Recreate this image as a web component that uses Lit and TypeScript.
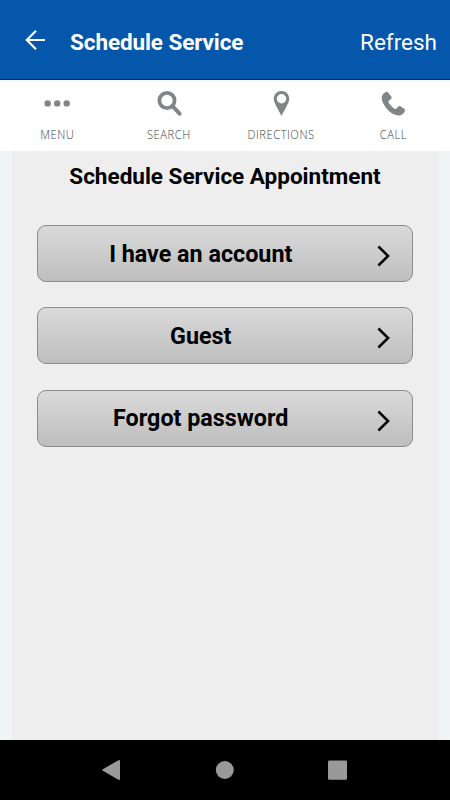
import { LitElement, html, css, svg } from "lit";
import { customElement } from "lit/decorators.js";

const tabs = [
  { id: "menu", label: "MENU", icon: svg`<circle cx="18.7" cy="14.4" r="3.2"/><circle cx="28.2" cy="14.4" r="3.2"/><circle cx="37.7" cy="14.4" r="3.2"/>` },
  { id: "search", label: "SEARCH", icon: svg`<circle cx="26" cy="11.5" r="7.6" fill="none" stroke="#808587" stroke-width="3.8"/><path d="M31.4 17L38.6 24.7" stroke="#808587" stroke-width="4" stroke-linecap="round"/>` },
  { id: "directions", label: "DIRECTIONS", icon: svg`<path fill-rule="evenodd" d="M28.5 2C24.1 2 20.8 5.3 20.8 9.7C20.8 13.5 23.5 17 28.5 27C33.5 17 36.2 13.5 36.2 9.7C36.2 5.3 32.9 2 28.5 2ZM28.5 5A4.7 4.7 0 1 1 28.5 14.4A4.7 4.7 0 1 1 28.5 5Z"/>` },
  { id: "call", label: "CALL", icon: svg`<path d="M20.5 3.2C17 5 16 8.3 17.4 12.5C20.3 19.6 26.2 25.6 33 26.4C36 26.6 38.2 25.2 39.7 22.5C40.2 21.4 40.1 20.8 39.4 20.1L35.6 17.2C34.8 16.7 34.1 16.8 33.4 17.5L31.3 19.7C30.8 20.2 30.2 20.2 29.4 19.7C27 18.1 25 16 23.6 13.6C23.2 12.8 23.3 12.3 23.9 11.8L26.1 9.8C26.8 9.1 26.9 8.5 26.4 7.7L23.3 3.7C22.5 2.7 21.6 2.6 20.5 3.2Z"/>` },
];

const choices = [
  { id: "account", label: "I have an account" },
  { id: "guest", label: "Guest" },
  { id: "forgot", label: "Forgot password" },
];

@customElement("app-root")
export class AppRoot extends LitElement {
  static styles = css`
    :host { display: flex; flex-direction: column; width: 450px; height: 800px; overflow: hidden; background: #f0f4f5; font-family: Roboto, sans-serif; }
    svg { display: block; flex: none; }
    .bar { box-sizing: border-box; height: 80px; flex: none; display: flex; align-items: center; padding: 2px 13px 0 22px; background: #0457ab; border-bottom: 1px solid #00249c; color: #fff; font-size: 22.5px; line-height: 26px; white-space: nowrap; }
    .back { margin-top: -1px; }
    .title { margin: 2px auto 0 22px; font-weight: 700; letter-spacing: -.1px; }
    .refresh { margin-top: 2px; }
    .tabs { height: 71px; flex: none; display: flex; justify-content: space-between; padding: 0 1px; background: linear-gradient(#f5f5f5, #fff 4px); }
    .tab { width: 112px; display: flex; flex-direction: column; align-items: center; padding-top: 9px; }
    .icon { fill: #808587; }
    .label { margin-top: 7px; font: 300 12.7px/16px "Open Sans", sans-serif; letter-spacing: .6px; margin-right: -.6px; transform: scaleX(.88); color: #3a4145; white-space: nowrap; }
    .page { flex: 1; margin: 0 12.5px 0 12.4px; padding: 12px 25px 0 25.1px; background: #eee; }
    .heading { margin: 0 0 35px; font-size: 22.5px; line-height: 27px; font-weight: 700; text-align: center; white-space: nowrap; }
    .choices { display: flex; flex-direction: column; gap: 25.3px; }
    .choice { box-sizing: border-box; height: 57px; display: flex; align-items: center; padding: 0 21px 0 0; border: 1px solid #8c8c8c; border-radius: 9px; background: linear-gradient(#dadada, #bebebe); }
    .text { flex: 1; padding-right: 13.5px; text-align: center; font-size: 23.3px; line-height: 28px; font-weight: 700; }
    .chevron { margin-top: 5px; }
    .system { height: 60px; flex: none; display: flex; justify-content: space-between; align-items: center; padding: 0 99px; background: #000; }
    .key { fill: #999; }
  `;

  render() {
    return html`
      <header class="bar">
        <svg class="back" width="26" height="26" viewBox="0 0 26 26" fill="none" stroke="#fff" stroke-width="2.2"><path d="M23 13H4.5M14 3.8L4.8 13L14 22.2"/></svg>
        <span class="title">Schedule Service</span><span class="refresh">Refresh</span>
      </header>
      <nav class="tabs">${tabs.map((t) => html`<div class="tab">
        <svg class="icon" width="56" height="30" viewBox="0 0 56 30">${t.icon}</svg>
        <span class="label ${t.id}">${t.label}</span></div>`)}</nav>
      <main class="page">
        <h1 class="heading">Schedule Service Appointment</h1>
        <div class="choices">${choices.map((c) => html`<div class="choice">
          <span class="text ${c.id}">${c.label}</span>
          <svg class="chevron" width="14" height="22" viewBox="0 0 14 22" fill="none" stroke="#000" stroke-width="2.5"><path d="M1.4 1.5L11.1 11L1.4 20.5"/></svg>
        </div>`)}</div>
      </main>
      <footer class="system">
        <svg class="key" width="24" height="24" viewBox="0 0 24 24"><path d="M3.8 11.2L19.5 2.2Q21 1.6 21 3V21Q21 22.4 19.5 21.8L3.8 12.8Q2.5 12 3.8 11.2Z"/></svg>
        <svg class="key" width="24" height="24" viewBox="0 0 24 24"><circle cx="11.8" cy="12" r="9"/></svg>
        <svg class="key" width="24" height="24" viewBox="0 0 24 24"><rect x="1" y="2.4" width="19" height="19.4" rx="1.4"/></svg>
      </footer>`;
  }
}
